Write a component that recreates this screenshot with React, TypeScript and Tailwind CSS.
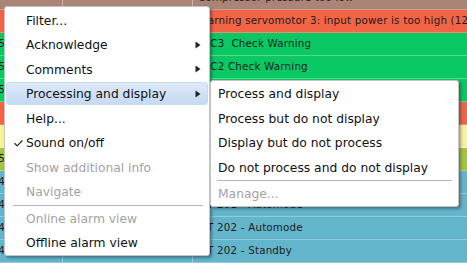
import { Check } from 'lucide-react';

type Row = { bg: string; line: string; num?: string; text: string };

const rows: Row[] = [
  { bg: 'bg-[#ab8478]', line: 'border-[#c4a49a]', text: 'Compressor pressure too low' },
  { bg: 'bg-[#f26446]', line: 'border-[#f58a72]', text: 'Warning servomotor 3: input power is too high (120 %)' },
  { bg: 'bg-[#0ac864]', line: 'border-[#52da8e]', num: '5', text: 'PLC3  Check Warning' },
  { bg: 'bg-[#0ac864]', line: 'border-[#52da8e]', num: '5', text: 'PLC2 Check Warning' },
  { bg: 'bg-[#0ac864]', line: 'border-[#52da8e]', num: '5', text: 'PLC1 Check Warning' },
  { bg: 'bg-[#f26446]', line: 'border-[#f58a72]', text: 'Warning servomotor 2: input power is too high' },
  { bg: 'bg-[#f7f29c]', line: 'border-[#fbf8c8]', text: 'Oil level low' },
  { bg: 'bg-[#a3c63a]', line: 'border-[#bcd672]', num: '5', text: 'Conveyor 4 stopped' },
  { bg: 'bg-[#63b5cc]', line: 'border-[#8fcbdc]', num: '4', text: 'MT 201 - Automode' },
  { bg: 'bg-[#63b5cc]', line: 'border-[#8fcbdc]', num: '4', text: 'MT 201 - Automode' },
  { bg: 'bg-[#63b5cc]', line: 'border-[#8fcbdc]', num: '4', text: 'MT 202 - Automode' },
  { bg: 'bg-[#63b5cc]', line: 'border-[#8fcbdc]', num: '4', text: 'MT 202 - Standby' },
];

const Arrow = () => (
  <svg width="6" height="8" viewBox="0 0 6 8" className="shrink-0">
    <path d="M0.5 0.5 L5.5 4 L0.5 7.5 Z" fill="#222" />
  </svg>
);

const MainItem = ({ label, sub, disabled, checked, active }: { label: string; sub?: boolean; disabled?: boolean; checked?: boolean; active?: boolean }) => (
  <div className="h-[24.5px] px-[1px] pt-[0.5px]">
    <div
      className={
        'h-[23px] flex items-center rounded-[3px] border ' +
        (active ? 'bg-gradient-to-b from-[#dde9f8] to-[#c6daf3] border-[#c9dbf1]' : 'border-transparent')
      }
    >
      <div className="w-[19px] flex justify-center">
        {checked && <Check size={11} strokeWidth={2.5} className="text-[#222] ml-[3px] mt-[1px]" />}
      </div>
      <span className={'flex-1 pt-[2px] ' + (disabled ? 'text-[#a3a3a3]' : 'text-[#111]')}>{label}</span>
      <div className="w-[7px] mr-[5px]">{sub && <Arrow />}</div>
    </div>
  </div>
);

const SubItem = ({ label, disabled }: { label: string; disabled?: boolean }) => (
  <div className={'h-[24.5px] flex items-center pl-[7px] pt-[2px] ' + (disabled ? 'text-[#a3a3a3]' : 'text-[#111]')}>{label}</div>
);

export default function App() {
  return (
    <div className="relative w-[467px] h-[273px] overflow-hidden bg-white" style={{ fontFamily: '"DejaVu Sans", Verdana, sans-serif' }}>
      {/* alarm table in the background */}
      <div className="-mt-[13px] text-[10.3px] text-[#1c1c1c] tracking-[0.2px]">
        {rows.map((r, i) => (
          <div key={i} className={'h-[23px] flex border-b ' + r.bg + ' ' + r.line}>
            <div className="w-[5px] flex justify-end items-center overflow-hidden">
              <span className="whitespace-nowrap">{r.num ?? ''}</span>
            </div>
            <div className="w-[58px] border-r border-white/40" />
            <div className="w-[130px] border-r border-white/40" />
            <div className="flex-1 flex items-center pl-[5px] whitespace-pre overflow-hidden">{r.text}</div>
          </div>
        ))}
      </div>

      {/* context menu */}
      <div className="absolute left-[4px] top-[6px] w-[206px] h-[250px] bg-white border border-[#c4c4c4] rounded-[3px] shadow-[2px_2px_3px_rgba(0,0,0,0.35)] pt-[1px] text-[12.3px]">
        <MainItem label="Filter..." />
        <MainItem label="Acknowledge" sub />
        <MainItem label="Comments" sub />
        <MainItem label="Processing and display" sub active />
        <MainItem label="Help..." />
        <MainItem label="Sound on/off" checked />
        <MainItem label="Show additional info" disabled />
        <MainItem label="Navigate" disabled />
        <div className="h-[2px] flex items-center ml-[8px] mr-[6px]">
          <div className="h-[1px] w-full bg-[#b4b4b4]" />
        </div>
        <MainItem label="Online alarm view" disabled />
        <MainItem label="Offline alarm view" />
      </div>

      {/* submenu */}
      <div className="absolute left-[210px] top-[80px] w-[249px] h-[127px] bg-white border border-[#c4c4c4] rounded-[3px] shadow-[2px_2px_3px_rgba(0,0,0,0.35)] text-[12.3px]">
        <SubItem label="Process and display" />
        <SubItem label="Process but do not display" />
        <SubItem label="Display but do not process" />
        <SubItem label="Do not process and do not display" />
        <div className="h-[2px] flex items-center mx-[6px]">
          <div className="h-[1px] w-full bg-[#b4b4b4]" />
        </div>
        <SubItem label="Manage..." disabled />
      </div>
    </div>
  );
}
